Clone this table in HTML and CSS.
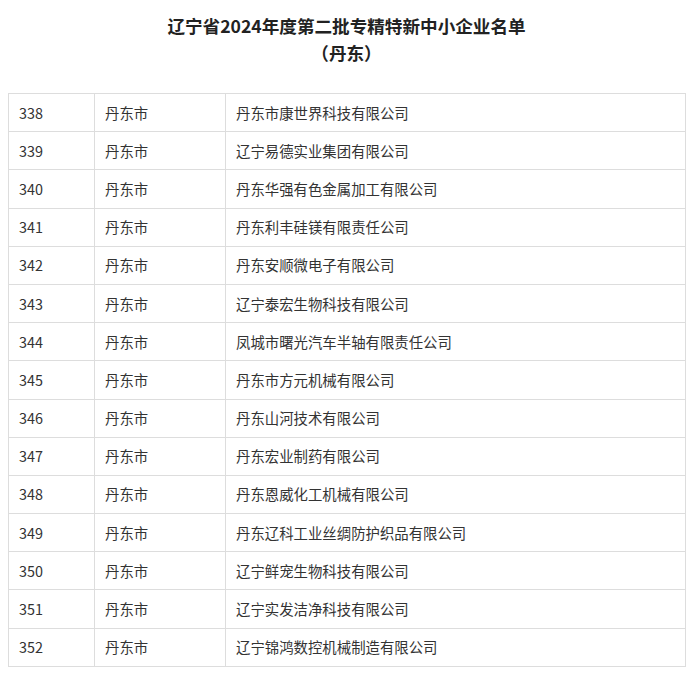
FILE: index.html
```html
<!DOCTYPE html>
<html lang="zh">
<head>
<meta charset="utf-8">
<link rel="stylesheet" href="styles.css">
</head>
<body>
<div class="page">
  <h1 class="title">辽宁省2024年度第二批专精特新中小企业名单<br>（丹东）</h1>
  <table class="list">
    <colgroup><col class="c1"><col class="c2"><col class="c3"></colgroup>
    <tbody>
      <tr><td>338</td><td>丹东市</td><td>丹东市康世界科技有限公司</td></tr>
      <tr><td>339</td><td>丹东市</td><td>辽宁易德实业集团有限公司</td></tr>
      <tr><td>340</td><td>丹东市</td><td>丹东华强有色金属加工有限公司</td></tr>
      <tr><td>341</td><td>丹东市</td><td>丹东利丰硅镁有限责任公司</td></tr>
      <tr><td>342</td><td>丹东市</td><td>丹东安顺微电子有限公司</td></tr>
      <tr><td>343</td><td>丹东市</td><td>辽宁泰宏生物科技有限公司</td></tr>
      <tr><td>344</td><td>丹东市</td><td>凤城市曙光汽车半轴有限责任公司</td></tr>
      <tr><td>345</td><td>丹东市</td><td>丹东市方元机械有限公司</td></tr>
      <tr><td>346</td><td>丹东市</td><td>丹东山河技术有限公司</td></tr>
      <tr><td>347</td><td>丹东市</td><td>丹东宏业制药有限公司</td></tr>
      <tr><td>348</td><td>丹东市</td><td>丹东恩威化工机械有限公司</td></tr>
      <tr><td>349</td><td>丹东市</td><td>丹东辽科工业丝绸防护织品有限公司</td></tr>
      <tr><td>350</td><td>丹东市</td><td>辽宁鲜宠生物科技有限公司</td></tr>
      <tr><td>351</td><td>丹东市</td><td>辽宁实发洁净科技有限公司</td></tr>
      <tr><td>352</td><td>丹东市</td><td>辽宁锦鸿数控机械制造有限公司</td></tr>
    </tbody>
  </table>
</div>
</body>
</html>
```

FILE: styles.css
```css
html, body {
  margin: 0;
  padding: 0;
  background: #ffffff;
}
.page {
  padding: 12px 0 0 8px;
  font-family: "Noto Sans CJK SC", "Noto Sans", sans-serif;
  color: #333333;
}
.title {
  margin: 0 0 27px 0;
  width: 677px;
  text-align: center;
  font-size: 17.6px;
  line-height: 27px;
  font-weight: bold;
  color: #222222;
}
.list {
  width: 677px;
  border-collapse: collapse;
  table-layout: fixed;
  font-size: 14.4px;
  color: #333333;
}
.c1 { width: 86px; }
.c2 { width: 131px; }
.c3 { width: 460px; }
.list td {
  border: 1px solid #dddddd;
  height: 37.2px;
  padding: 0 10px;
  vertical-align: middle;
  white-space: nowrap;
  line-height: 20px;
}
```
